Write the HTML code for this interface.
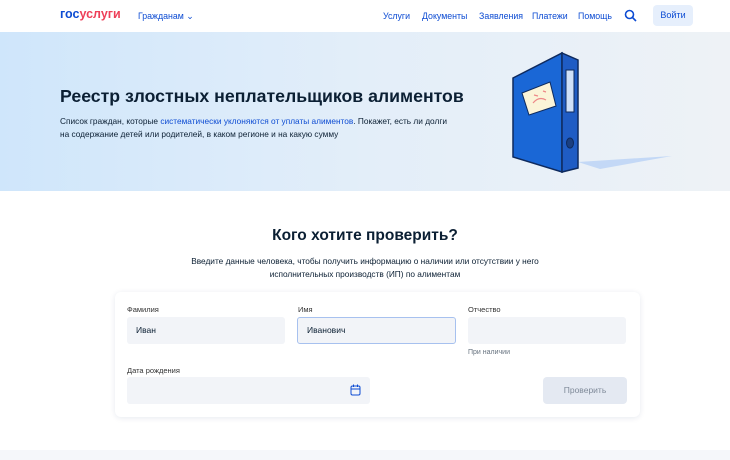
<!DOCTYPE html>
<html><head><meta charset="utf-8"><style>
*{margin:0;padding:0;box-sizing:border-box}
body{width:730px;height:460px;overflow:hidden;font-family:"Liberation Sans",sans-serif;background:#fff;color:#0b1f33;position:relative}
.hdr{height:32px;position:relative;background:#fff}
.abs{position:absolute}
.nav{font-size:8.8px;color:#0d4cd3;top:11px}
.hero{position:absolute;top:32px;left:0;width:730px;height:159px;background:linear-gradient(90deg,#cfe6fb 0%,#e3eef9 50%,#eef2f6 100%)}
label{position:absolute;font-size:7.5px;color:#333}
.in{position:absolute;background:#f2f4f8;border-radius:3px;font-size:8.5px;padding-left:9px;line-height:26px}
</style></head><body>
<div class="hdr">
<div class="abs" style="left:60px;top:7px;font-size:12.5px;font-weight:bold;letter-spacing:0px"><span style="color:#0d4cd3">гос</span><span style="color:#ee3f58">услуги</span></div>
<div class="abs nav" style="left:138px">Гражданам ⌄</div>
<div class="abs nav" style="left:383px">Услуги</div>
<div class="abs nav" style="left:422px">Документы</div>
<div class="abs nav" style="left:479px">Заявления</div>
<div class="abs nav" style="left:532px">Платежи</div>
<div class="abs nav" style="left:578px">Помощь</div>
<svg class="abs" style="left:624px;top:9px" width="13" height="13" viewBox="0 0 13 13"><circle cx="5.5" cy="5.5" r="4" fill="none" stroke="#0d4cd3" stroke-width="1.6"/><path d="M8.5 8.5L12 12" stroke="#0d4cd3" stroke-width="1.6"/></svg>
<div class="abs" style="left:653px;top:5px;width:40px;height:21px;background:#e6effc;border-radius:4px;font-size:9px;color:#0d4cd3;text-align:center;line-height:21px">Войти</div>
</div>
<div class="hero">
<div class="abs" style="left:60px;top:54px;font-size:17.7px;font-weight:bold;color:#0b1f33">Реестр злостных неплательщиков алиментов</div>
<div class="abs" style="left:60px;top:83px;font-size:8.3px;line-height:13px;color:#0b1f33">Список граждан, которые <span style="color:#0d4cd3">систематически уклоняются от уплаты алиментов</span>. Покажет, есть ли долги<br>на содержание детей или родителей, в каком регионе и на какую сумму</div>
<svg class="abs" style="left:500px;top:0" width="190" height="159" viewBox="0 0 190 159">
<path d="M78 130 L172 124 L100 137 Z" fill="#b9d2f5" opacity=".8"/>
<path d="M13 46 L62 21 L62 140 L13 125 Z" fill="#1a67d6" stroke="#0e2a5e" stroke-width="1.5"/>
<path d="M62 21 L78 28 L78 136 L62 140 Z" fill="#1f5cc4" stroke="#0e2a5e" stroke-width="1.5"/>
<rect x="66" y="38" width="8" height="42" fill="#cfe0f8" stroke="#0e2a5e"/>
<ellipse cx="70" cy="111" rx="3.5" ry="5" fill="#1b3f80" stroke="#0e2a5e"/>
<path d="M22 61 L50 50 L56 74 L29 83 Z" fill="#fbf4d8" stroke="#0e2a5e"/>
<path d="M33 71 Q39 64 46 68 M34 63 L38 64 M43 59 L46 60" stroke="#e88" fill="none" stroke-width="1.2"/>
</svg>
</div>
<div class="abs" style="left:0;top:227px;width:730px;text-align:center;font-size:15.5px;font-weight:bold">Кого хотите проверить?</div>
<div class="abs" style="left:0;top:255px;width:730px;text-align:center;font-size:8.3px;line-height:13px">Введите данные человека, чтобы получить информацию о наличии или отсутствии у него<br>исполнительных производств (ИП) по алиментам</div>
<div class="abs" style="left:115px;top:292px;width:525px;height:125px;border-radius:6px;box-shadow:0 1px 6px rgba(0,40,100,.1);background:#fff"></div>
<label style="left:127px;top:305px">Фамилия</label>
<div class="in" style="left:127px;top:317px;width:158px;height:27px">Иван</div>
<label style="left:298px;top:305px">Имя</label>
<div class="in" style="left:297px;top:317px;width:159px;height:27px;border:1px solid #a7c1ef;line-height:25px">Иванович</div>
<label style="left:468px;top:305px">Отчество</label>
<div class="in" style="left:468px;top:317px;width:158px;height:27px"></div>
<label style="left:468px;top:349px;color:#66727f;font-size:7px">При наличии</label>
<label style="left:127px;top:366px">Дата рождения</label>
<div class="in" style="left:127px;top:377px;width:243px;height:27px"></div>
<svg class="abs" style="left:350px;top:384px" width="11" height="12" viewBox="0 0 11 12"><rect x="1" y="2" width="9" height="9" rx="1.5" fill="none" stroke="#0d4cd3"/><path d="M1 5h9M3.5 0.5v2.5M7.5 0.5v2.5" stroke="#0d4cd3"/></svg>
<div class="abs" style="left:543px;top:377px;width:84px;height:27px;background:#e4e9f2;border-radius:4px;font-size:8.5px;color:#7f8a99;text-align:center;line-height:27px">Проверить</div>
<div class="abs" style="left:0;top:450px;width:730px;height:10px;background:#f5f7fa"></div>
</body></html>
